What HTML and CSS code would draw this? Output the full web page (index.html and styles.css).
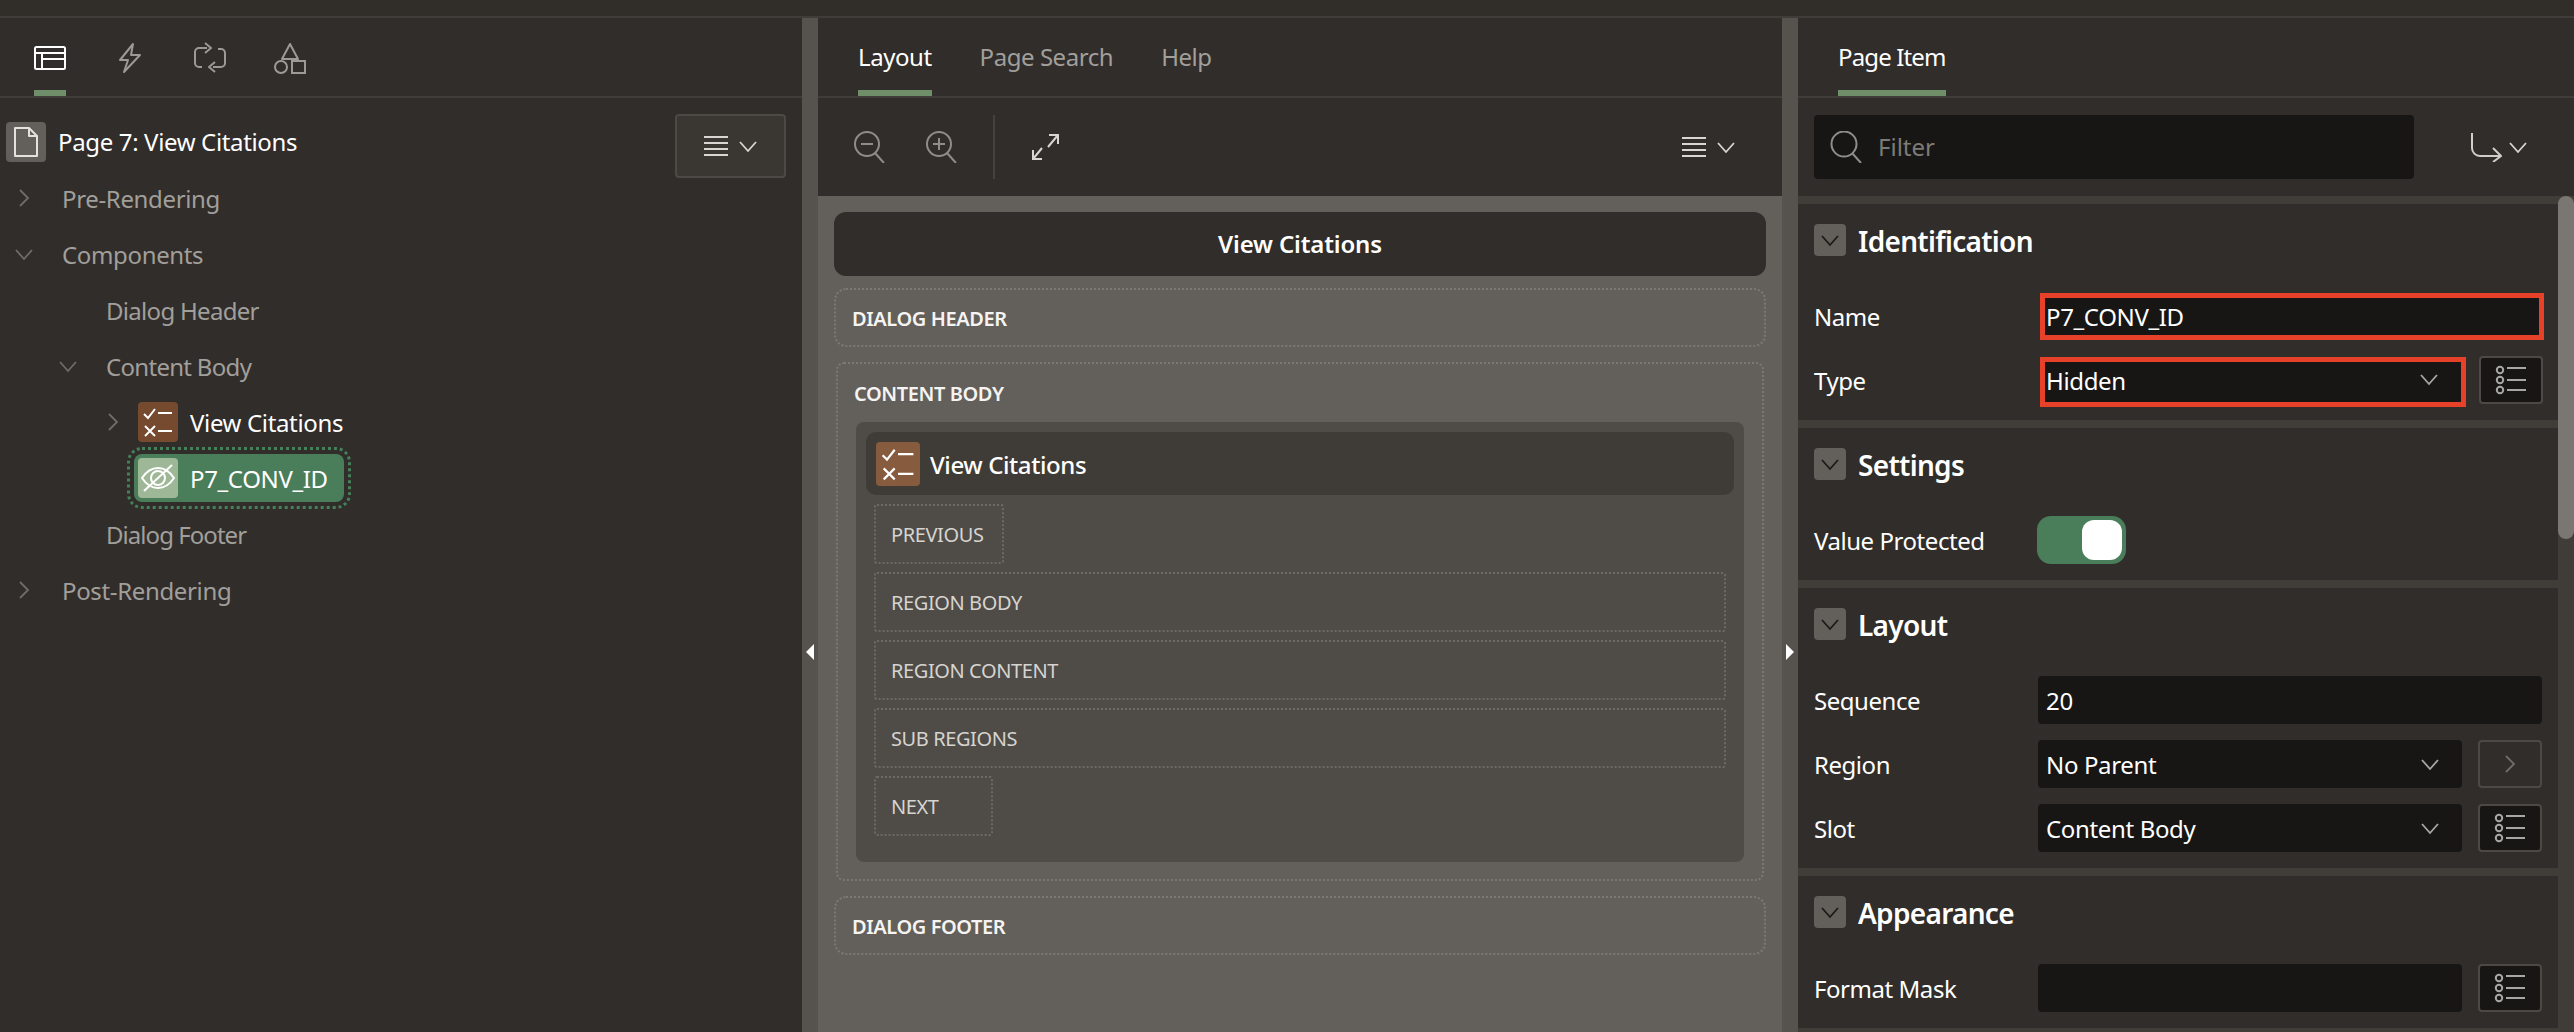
FILE: index.html
```html
<!DOCTYPE html>
<html lang="en">
<head>
<meta charset="utf-8">
<title>Page Designer</title>
<link rel="stylesheet" href="styles.css">
</head>
<body>
<svg class="sprite" aria-hidden="true">
  <symbol id="chev-d" viewBox="0 0 20 20"><path d="M2 6l8 9 8-9" fill="none" stroke="currentColor" stroke-width="1.8"/></symbol>
  <symbol id="chev-r" viewBox="0 0 20 20"><path d="M6 2l8 8-8 8" fill="none" stroke="currentColor" stroke-width="1.8"/></symbol>
  <symbol id="menu" viewBox="0 0 24 22"><path d="M0 2h24M0 8h24M0 14h24M0 20h24" fill="none" stroke="currentColor" stroke-width="2"/></symbol>
  <symbol id="checks" viewBox="0 0 40 40"><path d="M6 12l4 4 7-9M7 24l10 10M17 24L7 34M20 11h14M20 29h14" fill="none" stroke="#fff" stroke-width="2"/></symbol>
  <symbol id="list" viewBox="0 0 32 32"><g fill="none" stroke="currentColor" stroke-width="2"><circle cx="5" cy="6" r="3.2"/><circle cx="5" cy="16" r="3.2"/><circle cx="5" cy="26" r="3.2"/><path d="M12 4h19M12 16h19M12 26h19"/></g></symbol>
</svg>
<div class="app">
  <div class="topbar"></div>
  <div class="workspace">
    <section class="panel left">
      <div class="tabs icon-tabs">
        <div class="icon-tab active">
          <svg width="32" height="24" viewBox="0 0 32 24"><g fill="none" stroke="#fff" stroke-width="2"><rect x="1" y="1" width="30" height="22" rx="1.5"/><path d="M1 7h30M8 7v16M8 13h23"/></g></svg>
        </div>
        <div class="icon-tab">
          <svg width="24" height="32" viewBox="0 0 24 32"><path d="M15 2L2 18h8L6 30l16-17h-9z" fill="none" stroke="#9c9a96" stroke-width="2" stroke-linejoin="round"/></svg>
        </div>
        <div class="icon-tab">
          <svg width="32" height="32" viewBox="0 0 32 32"><g fill="none" stroke="#9c9a96" stroke-width="2" stroke-linejoin="round"><path d="M13 6H5a4 4 0 0 0-4 4v11a4 4 0 0 0 4 4h3M24 7h3a4 4 0 0 1 4 4v10a4 4 0 0 1-4 4h-8"/><path d="M11 1l6 5-6 5M21 20l-6 5 6 5"/></g></svg>
        </div>
        <div class="icon-tab">
          <svg width="32" height="32" viewBox="0 0 32 32"><g fill="none" stroke="#9c9a96" stroke-width="2"><path d="M16 2l8 15H8z" stroke-linejoin="round"/><circle cx="7" cy="25" r="6"/><rect x="18" y="19" width="13" height="12"/></g></svg>
        </div>
      </div>
      <div class="tree">
        <button class="tool-btn"><svg class="i-menu"><use href="#menu"/></svg><svg class="i-chev"><use href="#chev-d"/></svg></button>
        <div class="row page-row">
          <span class="page-icon"><svg width="28" height="32" viewBox="0 0 28 32"><path d="M3 2h14l8 8v20H3zM17 2v8h8" fill="none" stroke="#e4e2df" stroke-width="2" stroke-linejoin="round"/></svg></span>
          <span class="bright">Page 7: View Citations</span>
        </div>
        <div class="row l0"><svg class="twist"><use href="#chev-r"/></svg><span>Pre-Rendering</span></div>
        <div class="row l0"><svg class="twist"><use href="#chev-d"/></svg><span>Components</span></div>
        <div class="row l1"><span>Dialog Header</span></div>
        <div class="row l1 has-twist"><svg class="twist"><use href="#chev-d"/></svg><span>Content Body</span></div>
        <div class="row l2">
          <svg class="twist"><use href="#chev-r"/></svg>
          <span class="node-icon brown"><svg width="40" height="40"><use href="#checks"/></svg></span>
          <span class="bright">View Citations</span>
        </div>
        <div class="row l2">
          <div class="selected">
            <span class="node-icon pale">
              <svg width="40" height="40" viewBox="0 0 40 40"><g fill="none" stroke="#fff" stroke-width="2"><path d="M4 20c4-6 9-10 16-10s12 4 16 10c-4 6-9 10-16 10S8 26 4 20z"/><circle cx="20" cy="20" r="7"/><path d="M6 33L34 7"/></g></svg>
            </span>
            <span class="bright">P7_CONV_ID</span>
          </div>
        </div>
        <div class="row l1 tight"><span>Dialog Footer</span></div>
        <div class="row l0"><svg class="twist"><use href="#chev-r"/></svg><span>Post-Rendering</span></div>
      </div>
    </section>

    <div class="splitter"><span class="arrow arrow-left"></span></div>

    <section class="panel mid">
      <div class="tabs text-tabs">
        <div class="tab active">Layout</div>
        <div class="tab">Page Search</div>
        <div class="tab">Help</div>
      </div>
      <div class="mid-toolbar">
        <svg class="zoom-i" width="32" height="32" viewBox="0 0 32 32"><g fill="none" stroke="#8f8d89" stroke-width="2"><circle cx="13" cy="13" r="12"/><path d="M21 22l9 10M7 13h12"/></g></svg>
        <svg class="zoom-i" width="32" height="32" viewBox="0 0 32 32"><g fill="none" stroke="#8f8d89" stroke-width="2"><circle cx="13" cy="13" r="12"/><path d="M21 22l9 10M7 13h12M13 7v12"/></g></svg>
        <span class="divider"></span>
        <svg class="expand-i" width="28" height="28" viewBox="0 0 28 28"><g fill="none" stroke="#d8d6d2" stroke-width="2"><path d="M18 2h9v9M27 2l-10 12M2 17v9h9M2 26l9-11"/></g></svg>
        <span class="spacer"></span>
        <svg class="i-menu"><use href="#menu"/></svg><svg class="i-chev"><use href="#chev-d"/></svg>
      </div>
      <div class="canvas">
        <div class="dialog-title">View Citations</div>
        <div class="slot">DIALOG HEADER</div>
        <div class="content-body">
          <div class="slot-label">CONTENT BODY</div>
          <div class="region">
            <div class="region-head">
              <span class="node-icon brown small"><svg width="44" height="44" viewBox="0 0 40 40"><use href="#checks"/></svg></span>
              <span>View Citations</span>
            </div>
            <div class="boxes">
              <div class="box fit w-prev">PREVIOUS</div>
              <div class="box">REGION BODY</div>
              <div class="box">REGION CONTENT</div>
              <div class="box">SUB REGIONS</div>
              <div class="box fit w-next">NEXT</div>
            </div>
          </div>
        </div>
        <div class="slot">DIALOG FOOTER</div>
      </div>
    </section>

    <div class="splitter"><span class="arrow arrow-right"></span></div>

    <section class="panel right">
      <div class="tabs text-tabs">
        <div class="tab active narrow">Page Item</div>
      </div>
      <div class="filter-bar">
        <div class="filter">
          <svg width="32" height="32" viewBox="0 0 32 32"><g fill="none" stroke="#8f8d89" stroke-width="2"><circle cx="14" cy="13" r="12.5"/><path d="M22 22l9 10"/></g></svg>
          <span>Filter</span>
        </div>
        <svg class="goto" width="32" height="30" viewBox="0 0 32 30"><path d="M2 1v15a8 8 0 0 0 8 8h20M23 16l8 8-8 6" fill="none" stroke="#d0cecb" stroke-width="2"/></svg>
        <svg class="i-chev"><use href="#chev-d"/></svg>
      </div>
      <div class="props">
        <div class="scroll-track"><div class="scroll-thumb"></div></div>
        <div class="group">
          <div class="group-head"><span class="collapse"><svg><use href="#chev-d"/></svg></span><h2>Identification</h2></div>
          <div class="field"><label>Name</label><div class="input marked full">P7_CONV_ID</div></div>
          <div class="field"><label>Type</label><div class="input select marked">Hidden<svg class="sel-chev"><use href="#chev-d"/></svg></div><button class="side-btn"><svg><use href="#list"/></svg></button></div>
        </div>
        <div class="group">
          <div class="group-head"><span class="collapse"><svg><use href="#chev-d"/></svg></span><h2>Settings</h2></div>
          <div class="field"><label>Value Protected</label><div class="toggle"><span class="knob"></span></div></div>
        </div>
        <div class="group">
          <div class="group-head"><span class="collapse"><svg><use href="#chev-d"/></svg></span><h2>Layout</h2></div>
          <div class="field"><label>Sequence</label><div class="input full">20</div></div>
          <div class="field"><label>Region</label><div class="input select">No Parent<svg class="sel-chev"><use href="#chev-d"/></svg></div><button class="side-btn dim"><svg class="small-chev"><use href="#chev-r"/></svg></button></div>
          <div class="field"><label>Slot</label><div class="input select">Content Body<svg class="sel-chev"><use href="#chev-d"/></svg></div><button class="side-btn"><svg><use href="#list"/></svg></button></div>
        </div>
        <div class="group">
          <div class="group-head"><span class="collapse"><svg><use href="#chev-d"/></svg></span><h2>Appearance</h2></div>
          <div class="field"><label>Format Mask</label><div class="input select"></div><button class="side-btn"><svg><use href="#list"/></svg></button></div>
        </div>
      </div>
    </section>
  </div>
</div>
</body>
</html>
```
FILE: styles.css
```css
* { box-sizing: border-box; }
html, body { margin: 0; height: 100%; overflow: hidden; }
body { background: #312d2a; font-family: "Noto Sans", "Open Sans", sans-serif; font-size: 24px; color: #a19f9b; }
.sprite { display: none; }
.app { height: 1032px; display: flex; flex-direction: column; overflow: hidden; }
.topbar { height: 18px; flex: none; background: #312e2a; border-bottom: 2px solid #403d38; }
.workspace { flex: 1; min-height: 0; display: grid; grid-template-columns: 802px 16px 964px 16px 776px; }
.panel { min-width: 0; min-height: 0; display: flex; flex-direction: column; background: #312d2a; overflow: hidden; }
.splitter { background: #56524d; display: flex; justify-content: center; align-items: flex-start; padding-top: 626px; }
.arrow { width: 0; height: 0; border-top: 8px solid transparent; border-bottom: 8px solid transparent; }
.arrow-left { border-right: 8px solid #fff; }
.arrow-right { border-left: 8px solid #fff; }

.tabs { height: 80px; flex: none; display: flex; border-bottom: 2px solid #403d38; }
.icon-tabs { padding-left: 34px; gap: 44px; }
.icon-tab { width: 32px; position: relative; display: flex; align-items: center; justify-content: center; padding-top: 2px; }
.icon-tab:nth-child(2) { width: 40px; margin-right: 4px; }
.icon-tab:nth-child(3) { margin-left: -4px; }
.icon-tab:nth-child(4) { margin-left: 4px; }
.icon-tab.active, .tab.active { box-shadow: inset 0 -6px 0 #6e8f69; }
.text-tabs { padding-left: 40px; gap: 48px; }
.tab { display: flex; align-items: center; padding-bottom: 2px; font-size: 24px; letter-spacing: -0.45px; color: #a19f9b; }
.tab.active { color: #fff; }
.tab.narrow { letter-spacing: -0.85px; }

.tree { position: relative; padding-top: 16px; flex: 1; }
.row { height: 56px; display: flex; align-items: center; font-size: 24px; letter-spacing: -0.35px; position: relative; }
.page-row { padding-bottom: 2px; }
.bright { color: #fff; }
.twist { width: 20px; height: 20px; color: #6f6d69; flex: none; }
.l0 { padding-left: 14px; gap: 28px; }
.l1 { padding-left: 106px; letter-spacing: -0.7px; }
.tight { letter-spacing: -0.95px; }
.has-twist { padding-left: 58px; gap: 28px; }
.l2 { padding-left: 103px; gap: 15px; }
.l2 .node-icon { margin-right: -3px; }
.page-row { padding-left: 6px; gap: 12px; }
.page-icon { width: 40px; height: 40px; border-radius: 4px; background: #635f5a; display: flex; align-items: center; justify-content: center; margin-top: 1px; }
.node-icon { width: 40px; height: 40px; border-radius: 4px; flex: none; display: flex; align-items: center; justify-content: center; }
.brown { background: #754a2f; }
.pale { background: #9db797; }
.selected { margin-left: 31px; width: 210px; height: 48px; display: flex; align-items: center; gap: 12px; padding-left: 4px; background: #4a7d59; border-radius: 8px; outline: 3px dotted #458259; outline-offset: 4px; }
.selected .node-icon { margin-right: 0; }
.tool-btn { position: absolute; right: 16px; top: 16px; width: 111px; height: 64px; background: #3a3733; border: 2px solid #4d4a45; border-radius: 4px; display: flex; align-items: center; justify-content: center; gap: 10px; padding: 0; }
.i-menu { width: 24px; height: 22px; color: #d8d6d2; flex: none; }
.i-chev { width: 20px; height: 20px; color: #d8d6d2; flex: none; }

.mid-toolbar { height: 98px; flex: none; display: flex; align-items: center; padding: 0 46px 0 36px; }
.zoom-i { margin-right: 40px; }
.zoom-i + .zoom-i { margin-right: 35px; }
.divider { width: 2px; height: 64px; background: #46433e; }
.expand-i { margin-left: 36px; }
.spacer { flex: 1; }
.mid-toolbar .i-menu { margin-right: 10px; }

.canvas { flex: 1; min-height: 0; background: #635f5a; padding: 16px; display: flex; flex-direction: column; gap: 12px; }
.dialog-title { height: 64px; flex: none; display: flex; align-items: center; justify-content: center; padding-bottom: 1px; background: #312d2a; border-radius: 12px; color: #fff; font-weight: 600; font-size: 24px; letter-spacing: -0.15px; }
.slot { height: 59px; flex: none; border: 2px dotted #7c7873; border-radius: 12px; display: flex; align-items: center; padding: 2px 0 0 16px; color: #f5f4f2; font-weight: 600; font-size: 20px; letter-spacing: -0.4px; }
.content-body { margin: 3px 2px; height: 519px; flex: none; border: 2px dotted #7c7873; border-radius: 8px; padding: 0 18px; }
.slot-label { height: 58px; display: flex; align-items: center; margin-left: -2px; color: #f5f4f2; font-weight: 600; font-size: 20px; letter-spacing: -0.4px; }
.region { height: 440px; background: #4f4b47; border-radius: 8px; padding: 10px; }
.region-head { height: 63px; background: #3f3c37; border-radius: 10px; display: flex; align-items: center; gap: 10px; padding: 1px 0 0 10px; color: #fff; font-size: 24px; font-weight: 500; letter-spacing: -0.4px; }
.small { width: 44px; height: 44px; background: #875c3e; margin-top: -1px; }
.boxes { margin: 9px 8px 0; display: flex; flex-direction: column; gap: 8px; }
.box { height: 60px; border: 2px dotted #6d6965; border-radius: 3px; display: flex; align-items: center; padding: 1px 0 0 15px; font-size: 20px; letter-spacing: -0.4px; color: #d6d4d0; }
.w-prev { width: 130px; }
.w-next { width: 119px; }

.filter-bar { height: 98px; flex: none; display: flex; align-items: center; padding-left: 16px; }
.filter { width: 600px; height: 64px; background: #171614; border-radius: 4px; display: flex; align-items: center; gap: 16px; padding-left: 16px; color: #7d7b77; }
.filter span { padding-bottom: 2px; }
.goto { margin-left: 56px; margin-right: 6px; }
.props { flex: 1; min-height: 0; position: relative; background: #403d38; padding-top: 8px; padding-right: 16px; display: flex; flex-direction: column; gap: 8px; overflow: hidden; }
.scroll-track { position: absolute; right: 0; top: 0; bottom: 0; width: 16px; background: #403d38; }
.scroll-thumb { height: 343px; background: #7a7671; border-radius: 8px; }
.group { background: #312d2a; padding: 20px 0 16px 16px; display: flex; flex-direction: column; gap: 16px; flex: none; }
.group-head { height: 32px; display: flex; align-items: center; gap: 12px; margin-bottom: 20px; }
.group-head h2 { margin: 0; padding-top: 2px; font-size: 28px; font-weight: 600; color: #fff; letter-spacing: -0.7px; line-height: 32px; }
.collapse { width: 32px; height: 32px; border-radius: 4px; background: #635f5a; display: flex; align-items: center; justify-content: center; color: #1d1b19; }
.collapse svg { width: 20px; height: 20px; }
.field { height: 48px; display: flex; align-items: center; }
.field label { width: 224px; flex: none; color: #fff; font-size: 24px; letter-spacing: -0.45px; }
.input { height: 48px; background: #171614; border-radius: 4px; display: flex; align-items: center; padding-left: 8px; color: #fff; font-size: 24px; letter-spacing: -0.35px; position: relative; width: 424px; }
.input.full { width: 504px; }
.input.marked { border: 5px solid #e8412a; border-radius: 0; padding-left: 1px; margin: 1px 0 0 2px; height: 47px; }
.select.marked { width: 426px; height: 50px; margin-top: 4px; padding-bottom: 4px; }
.sel-chev { position: absolute; right: 22px; top: 14px; width: 20px; height: 20px; color: #aaa8a4; }
.marked .sel-chev { right: 22px; top: 7px; }
.side-btn { width: 64px; height: 48px; margin-left: 16px; background: #171614; border: 2px solid #4d4a45; border-radius: 4px; color: #a9a7a3; display: flex; align-items: center; justify-content: center; padding: 0; }
.select.marked + .side-btn { margin-left: 13px; }
.side-btn svg { width: 32px; height: 32px; }
.side-btn.dim { background: #312d2a; color: #6f6d69; }
.side-btn .small-chev { width: 20px; height: 20px; }
.toggle { width: 89px; height: 48px; margin-left: -1px; background: #4a7d59; border-radius: 14px; display: flex; justify-content: flex-end; align-items: center; padding-right: 4px; }
.knob { width: 40px; height: 40px; background: #fff; border-radius: 12px; }
```
